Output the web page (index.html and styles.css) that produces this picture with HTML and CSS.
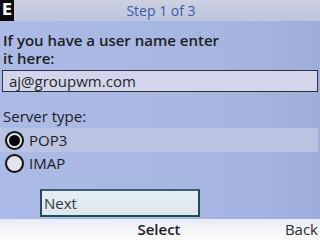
FILE: index.html
```html
<!DOCTYPE html>
<html>
<head>
<meta charset="utf-8">
<link rel="stylesheet" href="styles.css">
</head>
<body>
<div class="screen">
  <div class="header">
    <div class="logo">E</div>
    <div class="title">Step 1 of 3</div>
  </div>
  <div class="content">
    <div class="prompt">If you have a user name enter<br>it here:</div>
    <div class="input">aj@groupwm.com</div>
    <div class="label">Server type:</div>
    <div class="options">
      <div class="option selected"><span class="radio on"></span><span>POP3</span></div>
      <div class="option"><span class="radio"></span><span>IMAP</span></div>
    </div>
    <div class="btnrow"><div class="button">Next</div></div>
  </div>
  <div class="softkeys">
    <span class="sk-left"></span>
    <span class="sk-mid">Select</span>
    <span class="sk-right">Back</span>
  </div>
</div>
</body>
</html>
```
FILE: styles.css
```css
* { box-sizing: border-box; }
html, body { margin: 0; padding: 0; }
body { width: 320px; height: 240px; overflow: hidden; font-family: "Open Sans", "Noto Sans", sans-serif; color: #1e2024; }
.screen { width: 320px; height: 240px; display: flex; flex-direction: column; background: linear-gradient(to right, #abbbe5, #a6b6e0 70%, #9eaed8); }
.header { height: 21px; flex: none; display: flex; align-items: center; background: linear-gradient(to bottom, #ccd1e2, #bcc5de); }
.logo { width: 14px; height: 21px; background: #0c0c10; color: #fff; font-weight: 700; font-size: 15px; line-height: 21px; text-align: center; font-family: "DejaVu Sans", sans-serif; }
.title { flex: 1; text-align: center; color: #3a5aa6; font-size: 14px; line-height: 21px; padding-right: 12px; }
.content { flex: 1; display: flex; flex-direction: column; }
.prompt { font-size: 15px; font-weight: 600; line-height: 18px; padding: 10px 0 0 3px; color: #1c1e22; }
.input { margin: 3px 2px 0 2px; height: 22px; border: 1px solid #2a3444; background: #d3d6ea; font-size: 15px; line-height: 20px; padding-left: 6px; color: #24262a; }
.label { font-size: 15px; line-height: 18px; padding: 15px 0 0 3px; }
.options { margin-top: 3px; display: flex; flex-direction: column; }
.option { height: 22px; display: flex; align-items: center; gap: 5px; padding-left: 5px; font-size: 15px; margin-right: 2px; }
.option.selected { background: #bac3e1; height: 24px; }
.radio { width: 19px; height: 19px; border-radius: 50%; border: 2px solid #111; background: #e4e2ea; display: flex; align-items: center; justify-content: center; }
.radio.on::after { content: ""; width: 11px; height: 11px; border-radius: 50%; background: #050505; }
.btnrow { padding: 15px 0 0 40px; }
.button { width: 160px; height: 28px; border: 2px solid #254a58; border-top-color: #3a6070; background: linear-gradient(to bottom, #e6eef2, #dde7ee); font-size: 15px; line-height: 24px; padding-left: 2px; color: #303a40; }
.softkeys { height: 21px; flex: none; display: flex; align-items: center; background: linear-gradient(to bottom, #e9ecf2, #fbfbfb); font-size: 15px; line-height: 21px; }
.sk-left { flex: 1; }
.sk-mid { font-weight: 600; flex: 1; text-align: center; }
.sk-right { flex: 1; text-align: right; padding-right: 2px; color: #2a2c30; }
```
